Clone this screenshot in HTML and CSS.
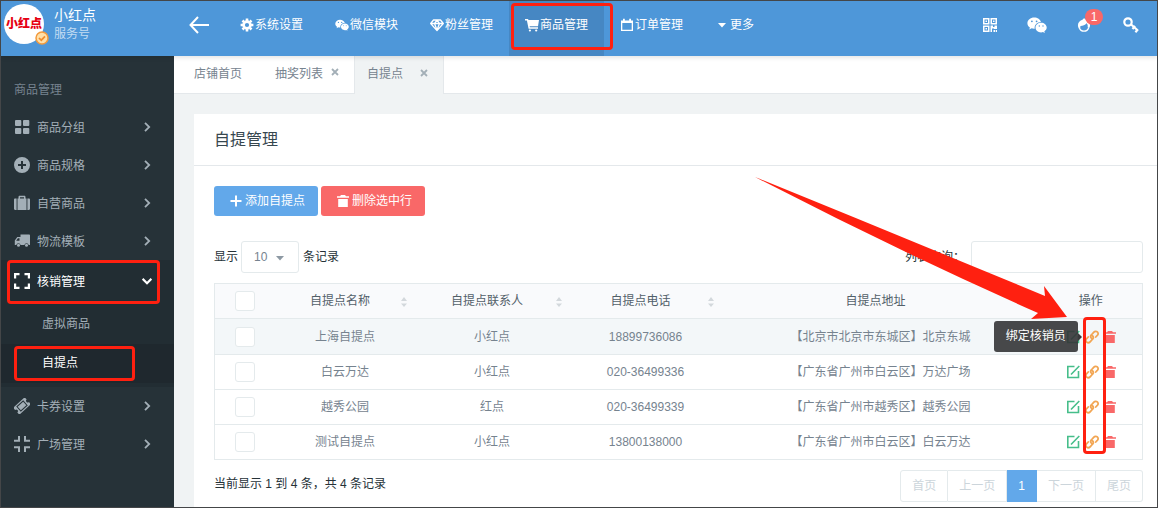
FILE: index.html
```html
<!DOCTYPE html>
<html lang="zh-CN">
<head>
<meta charset="utf-8">
<meta name="viewport" content="width=device-width, initial-scale=1">
<title>自提管理</title>
<link rel="stylesheet" href="styles.css">
</head>
<body>
<svg class="sprite" aria-hidden="true">
  <symbol id="i-gear" viewBox="0 0 14 14"><circle cx="7" cy="7" r="3.4" fill="none" stroke="currentColor" stroke-width="2.6"/><g stroke="currentColor" stroke-width="2.6"><path d="M7 .6v2.4M7 11v2.4M.6 7H3M11 7h2.4M2.5 2.5l1.6 1.6M9.9 9.9l1.6 1.6M2.5 11.5l1.6-1.6M9.9 4.1l1.6-1.6"/></g></symbol>
  <symbol id="i-wechat" viewBox="0 0 20 16"><path fill="currentColor" fill-rule="evenodd" d="M7.2.5C3.400.5.4 3 .4 6.200c0 1.800 1 3.300 2.500 4.300l-.6 2 2.300-1.200c.8.2 1.600.4 2.500.4h.6C7.200 8 10.200 5 14 5.100 13.400 2.400 10.500.5 7.200.5zM4.900 3.400a.9.9 0 1 1 0 1.800.9.9 0 0 1 0-1.800zm4.700 0a.9.9 0 1 1 0 1.800.9.9 0 0 1 0-1.800z"/><path fill="currentColor" fill-rule="evenodd" d="M19.700 10.600c0-2.700-2.600-4.800-5.600-4.800s-5.600 2.100-5.600 4.800 2.500 4.800 5.600 4.800c.7 0 1.300-.1 1.900-.3l1.800 1-.5-1.700c1.400-.9 2.400-2.200 2.400-3.800zM12.300 8.300a.7.7 0 1 1 0 1.400.7.7 0 0 1 0-1.400zm3.700 0a.7.7 0 1 1 0 1.400.7.7 0 0 1 0-1.400z"/></symbol>
  <symbol id="i-gem" viewBox="0 0 14 14"><path fill="none" stroke="currentColor" stroke-width="1.300" stroke-linejoin="round" d="M3.500 2h7L13.300 5.500 7 12.600.7 5.500zM.9 5.500h12.200M4.500 5.500 7 12l2.500-6.500L7 2.200z"/></symbol>
  <symbol id="i-cart" viewBox="0 0 14 14"><path fill="currentColor" d="M0 1h3l.5 1H14l-1 6.300H4.600l.3 1H13v1.400H3.600L1.900 2.400H0z"/><circle cx="4.900" cy="12.500" r="1.100" fill="currentColor"/><circle cx="11.200" cy="12.500" r="1.100" fill="currentColor"/></symbol>
  <symbol id="i-cal" viewBox="0 0 14 14"><path fill="currentColor" fill-rule="evenodd" d="M1 2.500h2V.8h1.800v1.700h4.400V.8H11v1.700h2V13H1zM2.300 5v6.700h9.400V5z"/></symbol>
  <symbol id="i-caret" viewBox="0 0 14 14"><path fill="currentColor" d="M3 5h8L7 9.500z"/></symbol>
  <symbol id="i-back" viewBox="0 0 20 18"><path fill="none" stroke="currentColor" stroke-width="2" d="M20 9H1.500M9 1 1.500 9 9 17"/></symbol>
  <symbol id="i-qr" viewBox="0 0 14 14"><path fill="currentColor" fill-rule="evenodd" d="M0 0h6.500v6.500H0zm1.500 1.500V5H5V1.500zM7.500 0H14v6.500H7.500zM9 1.500V5h3.500V1.500zM0 7.500h6.500V14H0zM1.500 9v3.500H5V9zM2.500 2.500H4V4H2.500zM10 2.500h1.500V4H10zM2.500 10H4v1.500H2.500zM7.500 7.500H10V9h1.500V7.500H14V11h-3v-.5H9V14H7.500zM10.500 12H12v2h-1.500zM12.700 12H14v2h-1.300z"/></symbol>
  <symbol id="i-head" viewBox="0 0 14 15"><path fill="currentColor" d="M5.500 2C5.700.8 6.600.2 7.800.6c.8.3 1.200.8 1.200 1.500 2.600.7 4.500 3 4.500 5.700 0 1.200-.4 2.300-1 3.200l-1.600-1.200c.4-1.800-.1-3.300-1.200-4.300C8.200 7.500 5.800 8.300 3.200 8.500c-.2.600-.2 1.100 0 1.700L1.500 11.200C.8 10.200.5 9 .5 7.800.5 5 2.700 2.500 5.500 2z"/><path fill="none" stroke="currentColor" stroke-width="1.300" d="M2 10.400c.7 2.200 2.600 3.700 5 3.700s4.300-1.500 5-3.700"/></symbol>
  <symbol id="i-key" viewBox="0 0 16 16"><g fill="none" stroke="currentColor" stroke-width="2.200"><circle cx="5" cy="5" r="3.700"/><path d="m7.600 7 7 6.200M9.500 12l2.600-3M12.400 15.200l2.600-3"/></g></symbol>
  <symbol id="i-grid" viewBox="0 0 16 16"><g fill="currentColor"><rect x="1" y="1" width="6.300" height="6" rx="1"/><rect x="9" y="1" width="6.300" height="6" rx="1"/><rect x="1" y="9" width="6.300" height="6" rx="1"/><rect x="9" y="9" width="6.300" height="6" rx="1"/></g></symbol>
  <symbol id="i-plusc" viewBox="0 0 16 16"><path fill="currentColor" fill-rule="evenodd" d="M8 0a8 8 0 1 1 0 16A8 8 0 0 1 8 0zM7 4v3H4v2h3v3h2V9h3V7H9V4z"/></symbol>
  <symbol id="i-case" viewBox="0 0 16 16"><path fill="currentColor" fill-rule="evenodd" d="M4.500 3.500V2c0-.8.500-1.200 1.200-1.200h4.600c.7 0 1.200.4 1.200 1.200v1.500h1V15h-9V3.500zM6 3.500h4V2.200H6zM2.600 3.500V15H1.200C.4 15 0 14.500 0 13.800V4.700c0-.7.4-1.200 1.200-1.200zM13.400 3.500h1.400c.8 0 1.200.5 1.200 1.200v9.100c0 .7-.4 1.200-1.200 1.200h-1.400z"/></symbol>
  <symbol id="i-truck" viewBox="0 0 16 16"><path fill="currentColor" fill-rule="evenodd" d="M6.500 1.500H15c.6 0 1 .4 1 1V12h-1.300a2.200 2.200 0 0 0-4.300 0H6.600a2.200 2.200 0 0 0-4.300 0H.8V7.500L3.300 4h3.200zM3.900 5.200 2.200 7.700h3.300V5.200z"/><circle cx="4.500" cy="12.300" r="1.500" fill="currentColor"/><circle cx="12.500" cy="12.300" r="1.500" fill="currentColor"/></symbol>
  <symbol id="i-expand" viewBox="0 0 16 16"><path fill="none" stroke="currentColor" stroke-width="2.200" d="M1.100 5.500V1.100h4.400M10.500 1.100h4.400v4.400M14.900 10.500v4.400h-4.400M5.500 14.900H1.100v-4.400"/></symbol>
  <symbol id="i-compress" viewBox="0 0 16 16"><path fill="none" stroke="currentColor" stroke-width="2" d="M5 0v4.800H0M11 0v4.800h5M16 11.200h-5V16M0 11.200h5V16"/></symbol>
  <symbol id="i-ticket" viewBox="0 0 16 16"><g transform="rotate(-42 8 8)"><path fill="currentColor" fill-rule="evenodd" d="M.2 3.300h15.600v3a1.700 1.700 0 0 0 0 3.400v3H.2v-3a1.700 1.700 0 0 0 0-3.400zM3.300 4.600v6.800h9.400V4.600z"/><path fill="currentColor" d="M4.300 5.600h7.400v4.800H4.300z"/></g></symbol>
  <symbol id="i-right" viewBox="0 0 10 10"><path fill="none" stroke="currentColor" stroke-width="1.800" d="m3 .8 4.200 4.200L3 9.200"/></symbol>
  <symbol id="i-down" viewBox="0 0 10 10"><path fill="none" stroke="currentColor" stroke-width="2.200" d="M.6 2.800 5 7.200l4.400-4.400"/></symbol>
  <symbol id="i-close" viewBox="0 0 8 8"><path stroke="currentColor" stroke-width="1.800" d="m1 1 6 6M7 1 1 7"/></symbol>
  <symbol id="i-plus" viewBox="0 0 12 12"><path stroke="currentColor" stroke-width="2" d="M6 .5v11M.5 6h11"/></symbol>
  <symbol id="i-trash" viewBox="0 0 12 12"><path fill="currentColor" d="M0 1.200h3L4 0h4l1 1.200h3v1.600H0zM1.200 4h9.600v8H1.200z"/></symbol>
  <symbol id="i-edit" viewBox="0 0 14 14"><path fill="none" stroke="currentColor" stroke-width="1.600" d="M8.500 1.500H1.800v11h10.700V6M5 9.500l8.300-8.500"/></symbol>
  <symbol id="i-link" viewBox="0 0 14 14"><path fill="none" stroke="currentColor" stroke-width="1.800" stroke-linecap="round" d="M6.600 8.400C5.300 7 5.400 5.900 6.300 5l2.600-2.900c.9-1 2.400-1.100 3.400-.2s1.100 2.300.2 3.300L10.800 7M7.400 5.600c1.300 1.400 1.200 2.500.3 3.400l-2.600 2.900c-.9 1-2.400 1.100-3.400.2s-1.100-2.300-.2-3.300L3.200 7"/></symbol>
  <symbol id="i-sort" viewBox="0 0 8 12"><path fill="currentColor" d="M4 1 7 5H1zM1 7.500h6L4 11z"/></symbol>
</svg>

<header class="topbar">
  <div class="brand">
    <div class="avatar">小红点
      <svg class="verified" viewBox="0 0 14 14"><circle cx="7" cy="7" r="6" fill="#ffe0a8" stroke="#f39a3d" stroke-width="1.500"/><path d="m4 7 2.300 2.200L10 5.300" fill="none" stroke="#f08c2e" stroke-width="1.700"/></svg>
    </div>
    <div class="brand-text"><strong>小红点</strong><span>服务号</span></div>
  </div>
  <button class="back" type="button" aria-label="返回"><svg><use href="#i-back"/></svg></button>
  <nav class="nav">
    <a href="#"><svg><use href="#i-gear"/></svg>系统设置</a>
    <a href="#"><svg><use href="#i-wechat"/></svg>微信模块</a>
    <a href="#"><svg><use href="#i-gem"/></svg>粉丝管理</a>
    <a href="#" class="active"><svg><use href="#i-cart"/></svg>商品管理<i class="mark mark-nav"></i></a>
    <a href="#"><svg><use href="#i-cal"/></svg>订单管理</a>
    <a href="#"><svg><use href="#i-caret"/></svg>更多</a>
  </nav>
  <div class="tools">
    <button type="button" aria-label="二维码"><svg><use href="#i-qr"/></svg></button>
    <button type="button" aria-label="微信"><svg class="wide"><use href="#i-wechat"/></svg></button>
    <button type="button" aria-label="消息"><svg><use href="#i-head"/></svg><span class="count">1</span></button>
    <button type="button" aria-label="密码"><svg class="key"><use href="#i-key"/></svg></button>
  </div>
</header>

<div class="shell">
  <aside class="sidebar">
    <h2>商品管理</h2>
    <a class="item" href="#"><svg><use href="#i-grid"/></svg><span>商品分组</span><svg class="chev"><use href="#i-right"/></svg></a>
    <a class="item" href="#"><svg><use href="#i-plusc"/></svg><span>商品规格</span><svg class="chev"><use href="#i-right"/></svg></a>
    <a class="item" href="#"><svg><use href="#i-case"/></svg><span>自营商品</span><svg class="chev"><use href="#i-right"/></svg></a>
    <a class="item" href="#"><svg><use href="#i-truck"/></svg><span>物流模板</span><svg class="chev"><use href="#i-right"/></svg></a>
    <div class="group">
      <a class="item open" href="#"><svg><use href="#i-expand"/></svg><span>核销管理</span><svg class="chev"><use href="#i-down"/></svg><i class="mark mark-group"></i></a>
      <div class="sub">
        <a href="#">虚拟商品</a>
        <a href="#" class="current">自提点<i class="mark mark-sub"></i></a>
      </div>
    </div>
    <a class="item" href="#"><svg><use href="#i-ticket"/></svg><span>卡券设置</span><svg class="chev"><use href="#i-right"/></svg></a>
    <a class="item" href="#"><svg><use href="#i-compress"/></svg><span>广场管理</span><svg class="chev"><use href="#i-right"/></svg></a>
  </aside>

  <main class="main">
    <div class="tabs">
      <a href="#" class="tab home">店铺首页</a>
      <div class="tab"><a href="#">抽奖列表</a><button type="button" aria-label="关闭"><svg><use href="#i-close"/></svg></button></div>
      <div class="tab selected"><a href="#">自提点</a><button type="button" aria-label="关闭"><svg><use href="#i-close"/></svg></button></div>
    </div>

    <section class="card">
      <h1>自提管理</h1>
      <div class="body">
        <div class="actions">
          <button type="button" class="btn add"><svg><use href="#i-plus"/></svg>添加自提点</button>
          <button type="button" class="btn remove"><svg><use href="#i-trash"/></svg>删除选中行</button>
        </div>
        <div class="filters">
          <label for="size">显示</label>
          <span class="select"><select id="size"><option>10</option><option>25</option><option>50</option></select><svg><use href="#i-caret"/></svg></span>
          <span class="after">条记录</span>
          <label for="query" class="push">列表查询：</label>
          <input id="query" type="text">
        </div>

        <div class="table-wrap">
          <table>
            <colgroup><col class="c-check"><col class="c-name"><col class="c-person"><col class="c-phone"><col><col class="c-ops"></colgroup>
            <thead>
              <tr>
                <th><input type="checkbox" aria-label="全选"></th>
                <th class="sortable">自提点名称<svg><use href="#i-sort"/></svg></th>
                <th class="sortable">自提点联系人<svg><use href="#i-sort"/></svg></th>
                <th class="sortable">自提点电话<svg><use href="#i-sort"/></svg></th>
                <th class="address">自提点地址</th>
                <th>操作</th>
              </tr>
            </thead>
            <tbody>
              <tr class="hover">
                <td><input type="checkbox" aria-label="上海自提点"></td><td>上海自提点</td><td>小红点</td><td>18899736086</td><td>【北京市北京市东城区】北京东城</td>
                <td><div class="ops"><button type="button" class="edit" aria-label="编辑"><svg><use href="#i-edit"/></svg></button><button type="button" class="link" aria-label="绑定核销员"><svg><use href="#i-link"/></svg><span class="tip">绑定核销员</span></button><button type="button" class="del" aria-label="删除"><svg><use href="#i-trash"/></svg></button></div></td>
              </tr>
              <tr>
                <td><input type="checkbox" aria-label="白云万达"></td><td>白云万达</td><td>小红点</td><td>020-36499336</td><td>【广东省广州市白云区】万达广场</td>
                <td><div class="ops"><button type="button" class="edit" aria-label="编辑"><svg><use href="#i-edit"/></svg></button><button type="button" class="link" aria-label="绑定核销员"><svg><use href="#i-link"/></svg></button><button type="button" class="del" aria-label="删除"><svg><use href="#i-trash"/></svg></button></div></td>
              </tr>
              <tr>
                <td><input type="checkbox" aria-label="越秀公园"></td><td>越秀公园</td><td>红点</td><td>020-36499339</td><td>【广东省广州市越秀区】越秀公园</td>
                <td><div class="ops"><button type="button" class="edit" aria-label="编辑"><svg><use href="#i-edit"/></svg></button><button type="button" class="link" aria-label="绑定核销员"><svg><use href="#i-link"/></svg></button><button type="button" class="del" aria-label="删除"><svg><use href="#i-trash"/></svg></button></div></td>
              </tr>
              <tr>
                <td><input type="checkbox" aria-label="测试自提点"></td><td>测试自提点</td><td>小红点</td><td>13800138000</td><td>【广东省广州市白云区】白云万达</td>
                <td><div class="ops"><button type="button" class="edit" aria-label="编辑"><svg><use href="#i-edit"/></svg></button><button type="button" class="link" aria-label="绑定核销员"><svg><use href="#i-link"/></svg></button><button type="button" class="del" aria-label="删除"><svg><use href="#i-trash"/></svg></button></div></td>
              </tr>
            </tbody>
          </table>
          <i class="mark mark-column"></i>
        </div>

        <div class="foot">
          <span>当前显示 1 到 4 条，共 4 条记录</span>
          <div class="pager">
            <button type="button" disabled>首页</button><button type="button" disabled>上一页</button><button type="button" class="on">1</button><button type="button" disabled>下一页</button><button type="button" disabled>尾页</button>
          </div>
        </div>
      </div>
      <svg class="arrow" viewBox="0 0 314 144" aria-hidden="true"><path fill="#ff2010" d="M1 1Q146 60 291 120L290 110 313 141 277 143 284 137Q140 73 1 1z"/></svg>
    </section>
  </main>
</div>
</body>
</html>
```

FILE: styles.css
```css
* { box-sizing: border-box; }

body {
  margin: 0;
  min-height: 100vh;
  display: flex;
  flex-direction: column;
  border: 1px solid #444648;
  background: #f0f3f4;
  color: #76838f;
  font: 12px/18px "Liberation Sans", "Noto Sans CJK SC", sans-serif;
}

a { color: inherit; text-decoration: none; }
button { margin: 0; padding: 0; border: 0; background: none; color: inherit; font: inherit; }
svg { display: block; flex: none; }
h1, h2 { margin: 0; font-weight: 400; }
.sprite { position: absolute; width: 0; height: 0; }

/* red highlight frames */
.mark {
  position: absolute;
  border: 3px solid #ff2010;
  border-radius: 4px;
  pointer-events: none;
}

/* top bar */
.topbar {
  position: relative;
  z-index: 2;
  display: flex;
  height: 55px;
  padding-right: 2px;
  background: #4e97d9;
  color: #fff;
  box-shadow: 0 2px 4px rgba(0, 0, 0, .1);
}
.brand { display: flex; width: 173px; padding: 3px; gap: 10px; }
.avatar {
  position: relative;
  width: 40px;
  height: 40px;
  border-radius: 50%;
  background: #fff;
  color: #e60012;
  font-size: 12px;
  font-weight: 900;
  line-height: 40px;
  text-align: center;
  white-space: nowrap;
}
.verified { position: absolute; right: -5px; bottom: -1px; width: 14px; height: 14px; }
.brand-text { display: flex; flex-direction: column; padding-top: 1px; }
.brand-text strong { font-size: 14px; font-weight: 400; line-height: 20px; }
.brand-text span { color: #c3dcf2; }
.back { display: flex; justify-content: center; width: 50px; padding-top: 15px; }
.back svg { width: 20px; height: 18px; }
.nav { display: flex; }
.nav a {
  position: relative;
  display: flex;
  align-items: center;
  gap: 1px;
  padding: 0 16px 8px;
  white-space: nowrap;
}
.nav svg { width: 14px; height: 14px; }
.nav .active { background: #4687c3; }
.mark-nav { top: 2px; left: 2px; right: -9px; height: 47px; }
.tools { display: flex; margin-left: auto; }
.tools button {
  position: relative;
  display: flex;
  align-items: center;
  justify-content: center;
  width: 47px;
  padding: 0 2px 8px 0;
}
.tools svg { width: 14px; height: 14px; }
.tools .wide { width: 20px; height: 16px; }
.tools .key { width: 16px; height: 16px; }
.count {
  position: absolute;
  top: 8px;
  left: 24px;
  width: 18px;
  height: 16px;
  border-radius: 8px;
  background: #f96868;
  line-height: 16px;
}

/* layout */
.shell { display: flex; flex: 1; }
.sidebar { width: 173px; flex: none; padding-top: 25px; background: #263238; color: #a3afb7; }
.main { display: flex; flex-direction: column; flex: 1; min-width: 0; }

/* sidebar */
.sidebar h2 { padding: 0 13px 9px; color: #76838f; font-size: 12px; line-height: 18px; }
.item {
  position: relative;
  display: flex;
  align-items: center;
  gap: 7px;
  height: 38px;
  padding: 0 22px 0 13px;
}
.item span { padding-top: 2px; }
.item svg { width: 16px; height: 16px; }
.item .chev { width: 10px; height: 10px; margin-left: auto; }
.group { background: #222d33; }
.item.open { height: 42px; color: #fff; }
.sub { padding: 3px 0 4px; }
.sub a { position: relative; display: block; padding-left: 41px; line-height: 39px; }
.sub .current { background: #1f282e; color: #fff; }
.mark-group { top: 0; left: 6px; right: 14px; bottom: -2px; }
.mark-sub { top: 2px; left: 13px; right: 39px; bottom: 2px; }

/* page tabs */
.tabs {
  display: flex;
  height: 38px;
  border-bottom: 1px solid #e4e8eb;
  background: #fff;
}
.tab { display: flex; align-items: center; gap: 8px; padding: 0 15px 2px 13px; white-space: nowrap; }
.tab.home { padding-left: 20px; padding-right: 20px; }
.tab button { padding-bottom: 3px; color: #a3afb7; }
.tab svg { width: 8px; height: 8px; }
.tab.selected {
  gap: 17px;
  height: 38px;
  padding-left: 12px;
  border: solid #e4e8eb;
  border-width: 0 1px;
  background: #f0f3f4;
}

/* card */
.card { position: relative; flex: 1; margin: 20px 0 0 20px; background: #fff; }
.card h1 {
  padding: 14px 20px 13px;
  border-bottom: 1px solid #e4e8eb;
  color: #37474f;
  font-size: 16px;
  line-height: 24px;
}
.body { padding: 20px 14px 5px 20px; color: #37474f; }
.actions { display: flex; gap: 3px; }
.btn {
  display: flex;
  align-items: center;
  gap: 3px;
  height: 30px;
  padding: 0 13px 0 16px;
  border-radius: 3px;
  color: #fff;
}
.btn svg { width: 12px; height: 12px; }
.add { background: #62a8ea; }
.remove { background: #f96868; }

.filters { display: flex; align-items: center; margin: 25px 0 10px; color: #263238; }
.select { position: relative; margin: 0 4px 0 3px; }
.select select {
  display: block;
  width: 58px;
  height: 32px;
  padding: 0 12px;
  border: 1px solid #e4eaec;
  border-radius: 3px;
  appearance: none;
  background: #fff;
  color: #76838f;
  font: inherit;
}
.select svg { position: absolute; top: 10px; right: 12px; width: 14px; height: 14px; color: #8d99a3; pointer-events: none; }
.push { margin-left: auto; }
#query {
  width: 172px;
  height: 32px;
  margin-left: 6px;
  padding: 0 10px;
  border: 1px solid #e4eaec;
  border-radius: 3px;
  font: inherit;
}

/* table */
.table-wrap { position: relative; }
table {
  width: 100%;
  border: 1px solid #e4eaec;
  border-collapse: collapse;
  table-layout: fixed;
  color: #76838f;
  text-align: center;
}
.c-check { width: 61px; }
.c-name { width: 139px; }
.c-person { width: 155px; }
.c-phone { width: 152px; }
.c-ops { width: 103px; }
th, td { height: 35px; padding: 0; border-bottom: 1px solid #e4eaec; white-space: nowrap; }
th { position: relative; background: #f9fafc; color: #526069; font-weight: 400; }
.hover td { height: 36px; }
.sortable, .address { padding-right: 10px; }
.sortable svg { position: absolute; top: 12px; right: 7px; width: 8px; height: 12px; color: #d3d8dc; }
.hover { background: #f3f7f9; }
input[type="checkbox"] {
  display: block;
  width: 20px;
  height: 20px;
  margin: 0 auto;
  border: 1px solid #e4eaec;
  border-radius: 3px;
  appearance: none;
  background: #fff;
}
.ops { display: flex; justify-content: center; gap: 5px; }
.ops svg { width: 14px; height: 14px; }
.ops .del svg { width: 12px; height: 12px; }
.ops button { position: relative; display: flex; align-items: center; }
.edit { color: #46be8a; }
.link { color: #f2a654; }
.del { color: #f96868; }
.mark-column { top: 34px; right: 37px; bottom: 6px; width: 23px; }

.tip {
  position: absolute;
  z-index: 1;
  right: 21px;
  padding: 0 12px;
  border-radius: 3px;
  background: rgba(52, 52, 54, .9);
  color: #fff;
  line-height: 31px;
}
.tip::after {
  content: "";
  position: absolute;
  top: 12px;
  left: 100%;
  border: 4px solid transparent;
  border-left-color: #3a3a3c;
  border-right: 0;
}

/* footer */
.foot { display: flex; justify-content: space-between; padding-top: 10px; color: #263238; }
.foot span { padding-top: 5px; }
.pager { display: flex; }
.pager button {
  height: 32px;
  padding: 0 11px;
  border: solid #e4eaec;
  border-width: 1px 1px 1px 0;
  background: #fff;
  color: #ccd5db;
}
.pager button:first-child { border-left-width: 1px; border-radius: 3px 0 0 3px; }
.pager button:last-child { border-radius: 0 3px 3px 0; }
.pager .on { border-color: #62a8ea; background: #62a8ea; color: #fff; }

.arrow { position: absolute; top: 62px; right: 89px; width: 314px; height: 144px; pointer-events: none; }
```
